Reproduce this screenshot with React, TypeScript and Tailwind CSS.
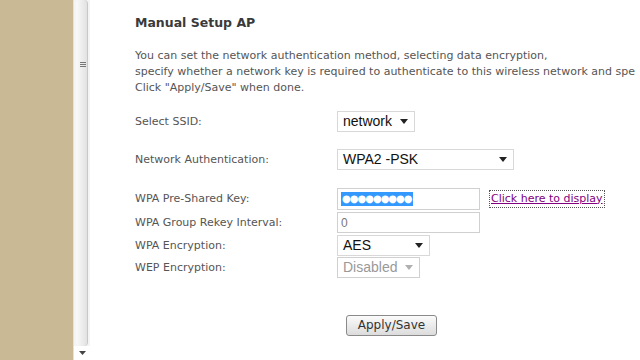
const Caret = ({ light }: { light?: boolean }) => (
  <svg width="8" height="5" viewBox="0 0 8 5" className="shrink-0">
    <path d="M0 0h8L4 5z" fill={light ? '#b0b0b0' : '#222'} />
  </svg>
);

const Row = ({ label, children, h }: { label: string; children: React.ReactNode; h: string }) => (
  <div className={`flex items-center ${h}`}>
    <div className="w-[202px] shrink-0 text-[#555]">{label}</div>
    {children}
  </div>
);

export default function App() {
  return (
    <div className="flex h-[360px] w-[640px] overflow-hidden bg-white font-['DejaVu_Sans',sans-serif] text-[11px]">
      <div className="w-[73px] shrink-0 bg-[#c9b995]" />
      <div className="flex w-[17px] shrink-0 flex-col border-l border-[#e4e2da] bg-[#f4f4f4]">
        <div className="relative mx-[2px] flex-1 rounded-sm border-r border-[#c8c8c8] bg-gradient-to-r from-[#fafafa] to-[#e2e2e2]">
          <div className="absolute left-[4px] top-[62px] flex w-[6px] flex-col gap-[1px]">
            <div className="h-[1px] bg-[#777]" />
            <div className="h-[1px] bg-[#777]" />
            <div className="h-[1px] bg-[#777]" />
          </div>
        </div>
        <div className="flex h-[14px] items-center justify-center bg-white">
          <svg width="7" height="4" viewBox="0 0 7 4">
            <path d="M0 0h7L3.5 4z" fill="#444" />
          </svg>
        </div>
      </div>
      <div className="flex-1 whitespace-nowrap pl-[45px] pt-[14px]">
        <div className="text-[12.5px] font-bold text-[#3a3a3a]">Manual Setup AP</div>
        <div className="mt-[15px] leading-[16px] text-[#555]">
          <div>You can set the network authentication method, selecting data encryption,</div>
          <div>specify whether a network key is required to authenticate to this wireless network and spe</div>
          <div>Click "Apply/Save" when done.</div>
        </div>

        <div className="mt-[14px]">
          <Row label="Select SSID:" h="h-[24px]">
            <div className="flex h-[21px] w-[78px] items-center justify-between border border-[#d8d8d8] pl-[5px] pr-[6px] font-['Liberation_Sans',sans-serif] text-[14px] text-[#111]">
              network
              <Caret />
            </div>
          </Row>
          <div className="h-[14px]" />
          <Row label="Network Authentication:" h="h-[24px]">
            <div className="flex h-[21px] w-[177px] items-center justify-between border border-[#d8d8d8] pl-[5px] pr-[6px] font-['Liberation_Sans',sans-serif] text-[14px] text-[#111]">
              WPA2 -PSK
              <Caret />
            </div>
          </Row>
          <div className="h-[15px]" />
          <Row label="WPA Pre-Shared Key:" h="h-[24px]">
            <div className="flex h-[22px] w-[143px] items-center border border-[#d0d0d0] px-[3px]">
              <span className="bg-[#3399ff] px-[1px] text-[10px] leading-[14px] tracking-[-1px] text-white">●●●●●●●●●</span>
            </div>
            <a className="ml-[9px] border border-dotted border-[#555] px-[1px] text-[11px] text-[#800080] underline">
              Click here to display
            </a>
          </Row>
          <Row label="WPA Group Rekey Interval:" h="h-[24px]">
            <div className="flex h-[21px] w-[143px] items-center border border-[#d0d0d0] px-[3px] font-['Liberation_Sans',sans-serif] text-[12px] text-[#777]">
              0
            </div>
          </Row>
          <Row label="WPA Encryption:" h="h-[22px]">
            <div className="flex h-[21px] w-[93px] items-center justify-between border border-[#d8d8d8] pl-[5px] pr-[6px] font-['Liberation_Sans',sans-serif] text-[14px] text-[#111]">
              AES
              <Caret />
            </div>
          </Row>
          <Row label="WEP Encryption:" h="h-[22px]">
            <div className="flex h-[21px] w-[83px] items-center justify-between border border-[#d0d0d0] pl-[5px] pr-[6px] font-['Liberation_Sans',sans-serif] text-[14px] text-[#999]">
              Disabled
              <Caret light />
            </div>
          </Row>
        </div>

        <div className="mt-[36px] pl-[211px]">
          <button className="h-[21px] w-[91px] rounded-[3px] border border-[#8a8a8a] bg-gradient-to-b from-[#fbfbfb] to-[#dcdcdc] text-[12px] text-[#333]">
            Apply/Save
          </button>
        </div>
      </div>
    </div>
  );
}
